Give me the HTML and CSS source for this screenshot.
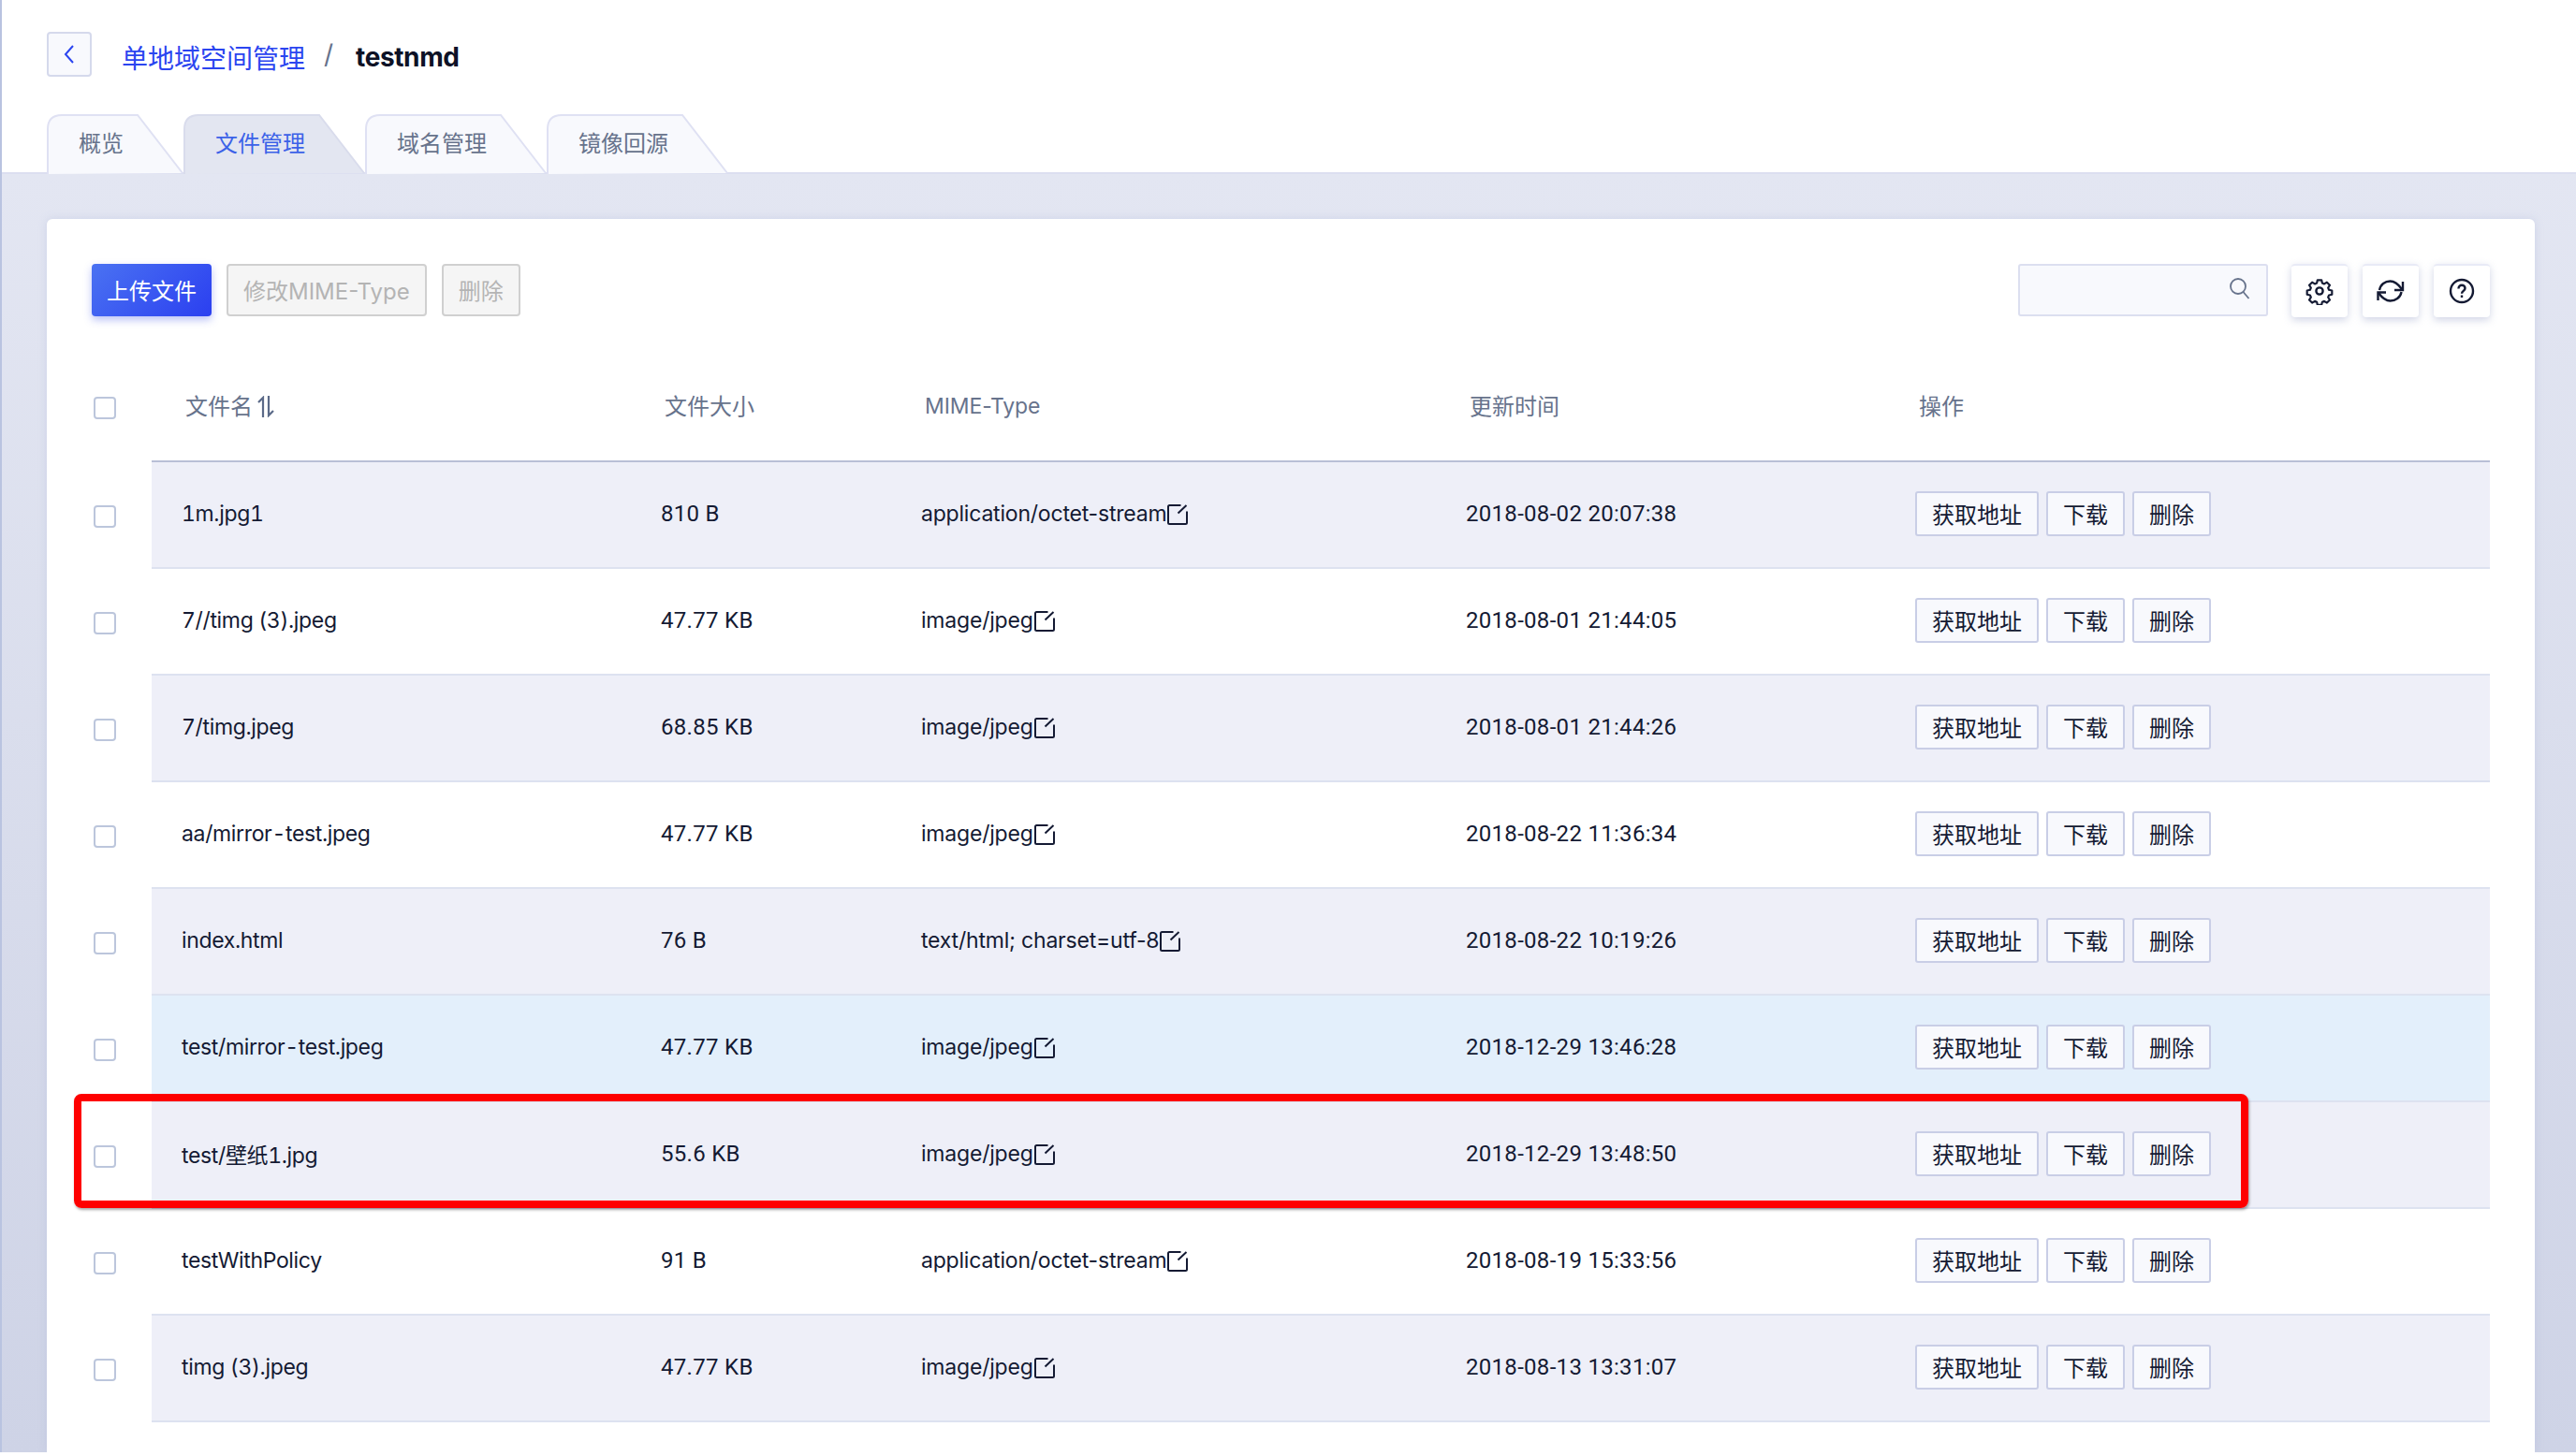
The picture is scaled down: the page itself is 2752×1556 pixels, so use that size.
FILE: index.html
```html
<!DOCTYPE html>
<html lang="zh-CN">
<head>
	<meta charset="UTF-8">
	<title>testnmd</title>
	<link rel="stylesheet" href="styles.css">
</head>
<body>
	<div class="top">
		<div class="crumb">
			<a class="back" href="#"><svg width="12" height="22" viewBox="0 0 12 22"><path d="M10 2 2 11l8 9" fill="none" stroke="#2b45f0" stroke-width="2"/></svg></a>
			<a class="crumb-link" href="#">单地域空间管理</a>
			<span class="crumb-sep">/</span>
			<b class="crumb-name">testnmd</b>
		</div>
		<div class="tabs">
			<a class="tab tab-short" href="#"><svg class="tab-bg" viewBox="0 0 146 64" preserveAspectRatio="none"><path d="M1 64V16Q1 1 16 1H97L145 63"/></svg><span>概览</span></a>
			<a class="tab select" href="#"><svg class="tab-bg" viewBox="0 0 194 64" preserveAspectRatio="none"><path d="M1 64V16Q1 1 16 1H145L193 63"/></svg><span>文件管理</span></a>
			<a class="tab" href="#"><svg class="tab-bg" viewBox="0 0 194 64" preserveAspectRatio="none"><path d="M1 64V16Q1 1 16 1H145L193 63"/></svg><span>域名管理</span></a>
			<a class="tab" href="#"><svg class="tab-bg" viewBox="0 0 194 64" preserveAspectRatio="none"><path d="M1 64V16Q1 1 16 1H145L193 63"/></svg><span>镜像回源</span></a>
		</div>
	</div>
	<div class="content">
		<div class="card">
			<div class="toolbar">
				<button class="btn btn-primary">上传文件</button>
				<button class="btn btn-off">修改MIME-Type</button>
				<button class="btn btn-off">删除</button>
				<div class="search">
					<svg width="24" height="24" viewBox="0 0 24 24" fill="none" stroke="#67738c" stroke-width="1.8"><circle cx="10" cy="10" r="8"/><path d="M15.5 16l6 7"/></svg>
				</div>
				<button class="icon-btn"><svg width="30" height="30" viewBox="0 0 30 30" fill="none" stroke="#141a33" stroke-width="2.4" stroke-linejoin="round"><path d="M12.6 2h4.800l.8 3.600 2.400 1 3.200-2 3.400 3.400-2 3.200 1 2.400 3.600.8v4.800l-3.600.8-1 2.400 2 3.200-3.400 3.400-3.200-2-2.400 1-.8 3.600h-4.800l-.8-3.600-2.400-1-3.200 2-3.400-3.400 2-3.200-1-2.400-3.600-.8v-4.800l3.600-.8 1-2.400-2-3.200 3.400-3.400 3.200 2 2.400-1z" transform="translate(1.500 1.500) scale(.9)"/><circle cx="15" cy="15" r="3.600"/></svg></button>
				<button class="icon-btn"><svg width="30" height="24" viewBox="0 0 30 24" fill="none" stroke="#141a33" stroke-width="2.4"><path d="M3 11C4 5 9 1.500 14.500 1.500c4.500 0 8.500 3 12.500 8.500"/><path d="M26.500 13C25.500 19 20 22.500 14.500 22.500c-4.500 0-8.500-3-12.500-8.500"/><path d="M28 2V11H19"/><path d="M1.500 22V13.500H10"/></svg></button>
				<button class="icon-btn"><svg width="28" height="28" viewBox="0 0 28 28" fill="none" stroke="#141a33" stroke-width="2.4"><circle cx="14" cy="14" r="12"/><path d="M10.500 11.500c0-2.200 1.500-3.800 3.500-3.800s3.500 1.500 3.500 3.400c0 2.700-3.500 3-3.500 5.700"/><path d="M14 18.500v2.500"/></svg></button>
			</div>
			<table class="files">
				<colgroup>
					<col class="c-check"><col class="c-name"><col class="c-size"><col class="c-mime"><col class="c-time"><col>
				</colgroup>
				<thead>
					<tr>
						<th><span class="check"></span></th>
						<th>文件名<svg class="sort" width="18" height="23" viewBox="0 0 18 23" fill="none" stroke="#5b6a88" stroke-width="2.2"><path d="M6 23V2L1 7"/><path d="M12 0v21l5-5"/></svg></th>
						<th>文件大小</th>
						<th class="th-mime">MIME-Type</th>
						<th>更新时间</th>
						<th>操作</th>
					</tr>
				</thead>
				<tbody>
					<tr class="odd">
						<td><span class="check"></span></td><td>1m.jpg1</td><td>810 B</td>
						<td>application/octet-stream<svg class="edit" width="22" height="22" viewBox="0 0 22 22"><path d="M14.500 1H2.500Q1 1 1 2.500V19.500Q1 21 2.500 21H19.500Q21 21 21 19.500V7.500M11.500 9.500 20.500 1"/></svg></td>
						<td>2018-08-02 20:07:38</td>
						<td><div class="ops"><button>获取地址</button><button>下载</button><button>删除</button></div></td>
					</tr>
					<tr>
						<td><span class="check"></span></td><td>7//timg (3).jpeg</td><td>47.77 KB</td>
						<td>image/jpeg<svg class="edit" width="22" height="22" viewBox="0 0 22 22"><path d="M14.500 1H2.500Q1 1 1 2.500V19.500Q1 21 2.500 21H19.500Q21 21 21 19.500V7.500M11.500 9.500 20.500 1"/></svg></td>
						<td>2018-08-01 21:44:05</td>
						<td><div class="ops"><button>获取地址</button><button>下载</button><button>删除</button></div></td>
					</tr>
					<tr class="odd">
						<td><span class="check"></span></td><td>7/timg.jpeg</td><td>68.85 KB</td>
						<td>image/jpeg<svg class="edit" width="22" height="22" viewBox="0 0 22 22"><path d="M14.500 1H2.500Q1 1 1 2.500V19.500Q1 21 2.500 21H19.500Q21 21 21 19.500V7.500M11.500 9.500 20.500 1"/></svg></td>
						<td>2018-08-01 21:44:26</td>
						<td><div class="ops"><button>获取地址</button><button>下载</button><button>删除</button></div></td>
					</tr>
					<tr>
						<td><span class="check"></span></td><td>aa/mirror-test.jpeg</td><td>47.77 KB</td>
						<td>image/jpeg<svg class="edit" width="22" height="22" viewBox="0 0 22 22"><path d="M14.500 1H2.500Q1 1 1 2.500V19.500Q1 21 2.500 21H19.500Q21 21 21 19.500V7.500M11.500 9.500 20.500 1"/></svg></td>
						<td>2018-08-22 11:36:34</td>
						<td><div class="ops"><button>获取地址</button><button>下载</button><button>删除</button></div></td>
					</tr>
					<tr class="odd">
						<td><span class="check"></span></td><td>index.html</td><td>76 B</td>
						<td>text/html; charset=utf-8<svg class="edit" width="22" height="22" viewBox="0 0 22 22"><path d="M14.500 1H2.500Q1 1 1 2.500V19.500Q1 21 2.500 21H19.500Q21 21 21 19.500V7.500M11.500 9.500 20.500 1"/></svg></td>
						<td>2018-08-22 10:19:26</td>
						<td><div class="ops"><button>获取地址</button><button>下载</button><button>删除</button></div></td>
					</tr>
					<tr class="hover">
						<td><span class="check"></span></td><td>test/mirror-test.jpeg</td><td>47.77 KB</td>
						<td>image/jpeg<svg class="edit" width="22" height="22" viewBox="0 0 22 22"><path d="M14.500 1H2.500Q1 1 1 2.500V19.500Q1 21 2.500 21H19.500Q21 21 21 19.500V7.500M11.500 9.500 20.500 1"/></svg></td>
						<td>2018-12-29 13:46:28</td>
						<td><div class="ops"><button>获取地址</button><button>下载</button><button>删除</button></div></td>
					</tr>
					<tr class="odd marked">
						<td><span class="check"></span><i class="red-box"></i></td><td>test/壁纸1.jpg</td><td>55.6 KB</td>
						<td>image/jpeg<svg class="edit" width="22" height="22" viewBox="0 0 22 22"><path d="M14.500 1H2.500Q1 1 1 2.500V19.500Q1 21 2.500 21H19.500Q21 21 21 19.500V7.500M11.500 9.500 20.500 1"/></svg></td>
						<td>2018-12-29 13:48:50</td>
						<td><div class="ops"><button>获取地址</button><button>下载</button><button>删除</button></div></td>
					</tr>
					<tr>
						<td><span class="check"></span></td><td>testWithPolicy</td><td>91 B</td>
						<td>application/octet-stream<svg class="edit" width="22" height="22" viewBox="0 0 22 22"><path d="M14.500 1H2.500Q1 1 1 2.500V19.500Q1 21 2.500 21H19.500Q21 21 21 19.500V7.500M11.500 9.500 20.500 1"/></svg></td>
						<td>2018-08-19 15:33:56</td>
						<td><div class="ops"><button>获取地址</button><button>下载</button><button>删除</button></div></td>
					</tr>
					<tr class="odd">
						<td><span class="check"></span></td><td>timg (3).jpeg</td><td>47.77 KB</td>
						<td>image/jpeg<svg class="edit" width="22" height="22" viewBox="0 0 22 22"><path d="M14.500 1H2.500Q1 1 1 2.500V19.500Q1 21 2.500 21H19.500Q21 21 21 19.500V7.500M11.500 9.500 20.500 1"/></svg></td>
						<td>2018-08-13 13:31:07</td>
						<td><div class="ops"><button>获取地址</button><button>下载</button><button>删除</button></div></td>
					</tr>
				</tbody>
			</table>
		</div>
	</div>
</body>
</html>
```

FILE: styles.css
```css
*{
	margin: 0;
	padding: 0;
	box-sizing: border-box;
}
html{
	height: 100%;
	overflow: hidden;
	background: #fff;
}
body{
	display: flex;
	flex-direction: column;
	height: 1552px;
	overflow: hidden;
	border-left: 2px solid #b9c3e0;
	background: #fff;
	font-family: Inter, "Noto Sans CJK SC", sans-serif;
	font-size: 24px;
	color: #141a33;
}
a{
	text-decoration: none;
}
button{
	font-family: inherit;
	font-size: 24px;
}
.top{
	height: 186px;
	padding: 34px 0 0 48px;
	border-bottom: 2px solid #dcdff0;
}
.crumb{
	display: flex;
	align-items: center;
	height: 48px;
	font-size: 28px;
}
.back{
	display: flex;
	align-items: center;
	justify-content: center;
	width: 48px;
	height: 48px;
	margin-right: 32px;
	background: #f8f9fd;
	border: 2px solid #d5d9ec;
	border-radius: 4px;
}
.crumb-link{
	padding-top: 5px;
	color: #2b45f0;
}
.crumb-sep{
	margin: 0 24px 0 20px;
	color: #67738c;
}
.crumb-name{
	padding-top: 5px;
	letter-spacing: -.4px;
	color: #0d1226;
}
.tabs{
	display: flex;
	height: 64px;
	margin-top: 40px;
}
.tab{
	position: relative;
	width: 194px;
	height: 64px;
	padding: 19px 0 0 34px;
	line-height: 26px;
	color: #67738c;
}
.tab-short{
	width: 146px;
}
.tab span{
	position: relative;
}
.tab-bg{
	position: absolute;
	left: 0;
	top: 0;
	width: 100%;
	height: 100%;
}
.tab-bg path{
	fill: #f8f9fd;
	stroke: #dfe1f3;
	stroke-width: 2;
}
.tab.select{
	color: #3c62e8;
}
.tab.select .tab-bg path{
	fill: #e3e6f1;
	stroke: #d9dcec;
}
.content{
	flex: 1;
	min-height: 0;
	padding: 48px 44px 0 48px;
	background: linear-gradient(#e3e6f2, #ced3e6);
}
.card{
	height: 100%;
	padding: 48px 48px 0;
	background: #fff;
	border-radius: 6px 6px 0 0;
	box-shadow: 0 0 8px rgba(170,178,215,.35);
}
.toolbar{
	display: flex;
	align-items: center;
	gap: 16px;
	height: 56px;
}
.btn{
	height: 56px;
	padding: 0 16px 2px;
	border-radius: 4px;
}
.btn-primary{
	width: 128px;
	padding: 0 0 2px;
	color: #fff;
	border: none;
	background: linear-gradient(135deg, #4a72f2, #2b3ff0);
	box-shadow: 0 4px 8px rgba(60,80,230,.35);
}
.btn-off{
	color: #b4b4b4;
	background: #f5f5f5;
	border: 2px solid #d0d0d0;
}
.search{
	display: flex;
	align-items: center;
	justify-content: flex-end;
	width: 267px;
	height: 56px;
	margin-left: auto;
	margin-right: 9px;
	padding: 0 16px 4px 0;
	background: #f8f9fd;
	border: 2px solid #dcdff0;
	border-radius: 3px;
}
.icon-btn{
	display: flex;
	align-items: center;
	justify-content: center;
	width: 60px;
	height: 57px;
	background: #fff;
	border: none;
	border-top: 2px solid #e8eaf6;
	border-radius: 4px;
	box-shadow: 0 3px 8px rgba(150,160,200,.45);
}
.files{
	width: 100%;
	margin-top: 37px;
	border-collapse: collapse;
	table-layout: fixed;
}
.c-check{
	width: 64px;
}
.c-name{
	width: 512px;
}
.c-size{
	width: 278px;
}
.c-mime{
	width: 582px;
}
.c-time{
	width: 480px;
}
.files th{
	height: 118px;
	padding: 0 0 2px 36px;
	text-align: left;
	font-weight: normal;
	color: #67738c;
	border-bottom: 2px solid #b9bfd6;
}
.files .th-mime{
	padding-bottom: 0;
	font-size: 23px;
	letter-spacing: -.1px;
}
.files th:first-child,.files td:first-child{
	padding: 4px 0 0 2px;
	border-bottom: none;
	background: #fff;
}
.files td{
	height: 114px;
	padding: 0 0 2px 32px;
	border-bottom: 2px solid #dde2f0;
}
.files td:first-child{
	position: relative;
}
.files td:nth-child(2){
	font-size: 23px;
	font-variant-numeric: tabular-nums;
	letter-spacing: -.35px;
}
.files td:nth-child(4){
	font-size: 23px;
	letter-spacing: -.2px;
}
.files td:nth-child(3),.files td:nth-child(5){
	font-family: Roboto, sans-serif;
	letter-spacing: .3px;
}
.odd td{
	background: #eeeff8;
}
.hover td{
	background: #e3effb;
}
.check{
	display: block;
	width: 24px;
	height: 24px;
	background: #fff;
	border: 2px solid #bcc6dc;
	border-radius: 4px;
}
.sort{
	vertical-align: -3px;
	margin-left: 5px;
}
.edit{
	vertical-align: -4px;
	margin-left: 1px;
	fill: none;
	stroke: #141a33;
	stroke-width: 2;
}
.ops{
	display: flex;
	gap: 8px;
}
.ops button{
	height: 48px;
	padding: 0 16px 2px;
	color: #141a33;
	background: #f8f9fd;
	border: 2px solid #c9cee6;
	border-radius: 3px;
}
/* red mark, drawn over the row */
.red-box{
	position: absolute;
	left: -19px;
	top: -8px;
	width: 2323px;
	height: 122px;
	border: 8px solid #fe0000;
	border-radius: 8px;
	box-shadow: 1px 2px 3px rgba(0,0,0,.35);
	pointer-events: none;
	z-index: 2;
}
```
